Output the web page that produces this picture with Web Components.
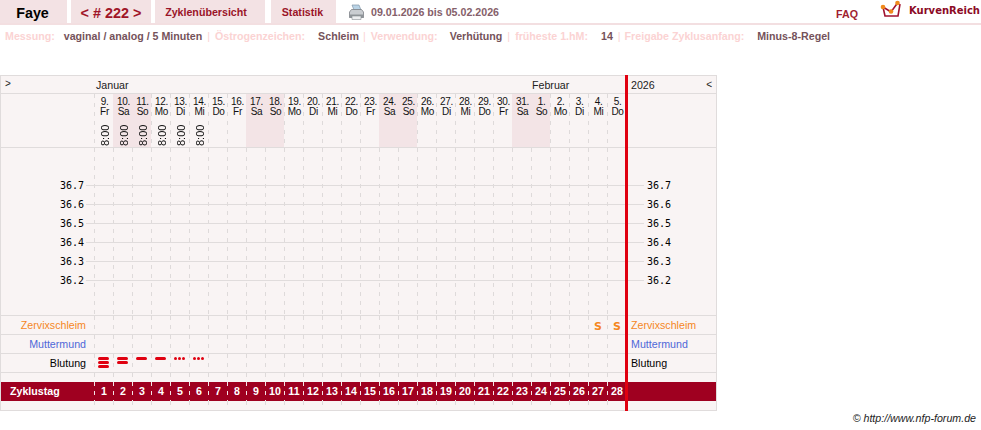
<!DOCTYPE html>
<html lang="de"><head><meta charset="utf-8"><title>Faye</title>
<style>
html,body{margin:0;padding:0;background:#fff;font:10.67px "Liberation Sans",Arial,sans-serif}
</style></head><body>
<top-nav></top-nav>
<info-bar></info-bar>
<cycle-chart></cycle-chart>
<page-foot></page-foot>
<script>
const COLORS={tab:'#f3e2e4',line:'#e0dcdc',panel:'#f9f4f4',wk:'#f3e4e6',red:'#9f0020',bar:'#e00010'};
function def(name,css,html,extra){
  customElements.define(name,class extends HTMLElement{
    connectedCallback(){ if(this.shadowRoot) return;
      const r=this.attachShadow({mode:'open'});
      r.innerHTML='<style>'+css+'</style>'+(typeof html==='function'?html(this):html);
      if(extra) extra(r,this);
    }
  });
}
const DASH='repeating-linear-gradient(to bottom,#000 0 4px,transparent 4px 9px)';
def('nav-tab',`:host{display:flex;align-items:center;justify-content:center;height:23px;background:${COLORS.tab};font:bold 10.67px "Liberation Sans",sans-serif;color:#9a1428;box-sizing:border-box}`,'<slot></slot>');
def('top-nav',`
:host{display:flex;height:23px;border-bottom:2px solid #f3dfe1;align-items:stretch;position:relative}
nav-tab.a{width:67px;font-size:14.3px;color:#000;padding:2px 2px 0 0}
nav-tab.b{width:80px;margin-left:4px;font-size:14.4px;color:#a01428;padding-top:2px}
nav-tab.c{width:110px;margin-left:4px;padding-right:8px}
nav-tab.d{width:65px;margin-left:6px;padding-right:2px}
.p{margin:4px 0 0 12px;width:17px;height:17px;flex:none}
.date{margin-left:6px;font-weight:bold;color:#85606a;line-height:24px}
.sp{flex:1}
.faq{font-weight:bold;color:#a01f30;line-height:28px;margin-right:22px}
.logo{width:24px;height:20px;margin-right:5px;flex:none}
.kr{font:bold 10px "DejaVu Sans",sans-serif;color:#8b0a25;line-height:21px;margin-right:1px}
`,`<nav-tab class="a">Faye</nav-tab><nav-tab class="b">&lt; # 222 &gt;</nav-tab><nav-tab class="c">Zyklenübersicht</nav-tab><nav-tab class="d">Statistik</nav-tab>
<svg class="p" viewBox="0 0 17 17"><path d="M4 1h7l2 5H6z" fill="#b9d3e6" stroke="#8297a8" stroke-width=".7"/><path d="M1.5 8l2-2.500h10l2 2.500v5.500h-14z" fill="#c9cdd1" stroke="#7d8287" stroke-width=".8"/><path d="M1.500 10.500h14v3.500h-14z" fill="#8f9499"/><path d="M4 12h9v3.500h-9z" fill="#eceef0" stroke="#8b9095" stroke-width=".6"/></svg>
<span class="date">09.01.2026 bis 05.02.2026</span><span class="sp"></span><span class="faq">FAQ</span>
<svg class="logo" viewBox="0 0 24 20"><path d="M3 7l2 9h13l2-12M3 7l8 5 6.500-9" fill="none" stroke="#a0122f" stroke-width="1.600"/><circle cx="3" cy="7" r="2.300" fill="#f08a1c"/><circle cx="11" cy="11.500" r="2.300" fill="#f08a1c"/><circle cx="17.500" cy="3" r="2.300" fill="#f08a1c"/></svg>
<span class="kr">KurvenReich</span>`);
def('info-bar',`:host{display:flex;height:22px;align-items:center;padding-left:5px;font:bold 10.67px "Liberation Sans",sans-serif;white-space:pre}
b{font-weight:bold;color:#fbd3d3}i{font-style:normal;color:#75525a}u{text-decoration:none;color:#fbd3d3;font-weight:normal}`,
`<b>Messung:</b><i style="margin-left:9px">vaginal / analog / 5 Minuten</i><u style="margin-left:5px">|</u><b style="margin-left:5px">Östrogenzeichen:</b><i style="margin-left:13px">Schleim</i><u style="margin-left:4px">|</u><b style="margin-left:5px">Verwendung:</b><i style="margin-left:12px">Verhütung</i><u style="margin-left:5px">|</u><b style="margin-left:5px">früheste 1.hM:</b><i style="margin-left:13px">14</i><u style="margin-left:5px">|</u><b style="margin-left:4px">Freigabe Zyklusanfang:</b><i style="margin-left:13px">Minus-8-Regel</i>`);

/* one row: label column, 28 day columns, right column */
def('chart-row',`
:host{display:grid;grid-template-columns:93px 532px 90px;border-bottom:1px solid ${COLORS.line};height:var(--h,18px);background:var(--bg,${COLORS.panel});color:var(--fg,#000);font:10.67px "Liberation Sans",sans-serif}
.l{display:flex;align-items:center;justify-content:flex-end;padding-right:8px;white-space:nowrap;color:var(--c,inherit)}
.d{position:relative;display:grid;grid-template-columns:repeat(28,19px)}
:host(:not([nodash])) .d::before{content:"";position:absolute;inset:0;background:repeating-linear-gradient(to right,var(--dash,#dedada) 0 1px,transparent 1px 19px);-webkit-mask-image:${DASH};mask-image:${DASH}}
.r{display:flex;align-items:center;padding-left:5px;white-space:nowrap;color:var(--c,inherit)}
`,`<div class="l"><slot name="label"></slot></div><div class="d"><slot></slot></div><div class="r"><slot name="right"></slot></div>`);

def('day-head',`
:host{display:block;position:relative;text-align:center;font:10px/10px "Liberation Sans",sans-serif;letter-spacing:-.3px;color:#111;padding-top:3px;padding-left:2px;box-sizing:border-box;height:53px;background:var(--w,transparent)}
div{white-space:nowrap}
.t{position:absolute;left:6px;bottom:1px;writing-mode:vertical-rl;transform:rotate(180deg);font:11px/11px "Liberation Sans",sans-serif;letter-spacing:0;height:24px;text-align:left}
`,h=>`<div>${h.getAttribute('d')}.</div><div>${h.getAttribute('w')}</div>${h.hasAttribute('t')?`<span class="t">8:00</span>`:''}`);

def('temp-row',`
:host{display:flex;height:19px;align-items:center;font:10px "DejaVu Sans Mono",monospace;color:#000}
span{padding-bottom:1px}
.a{width:83px;text-align:right;flex:none}
.n{flex:none;width:558px;height:1px;background:${COLORS.line};margin:0 3px 0 2px;padding:0}
`,h=>{const v=h.getAttribute('v');return `<span class="a">${v}</span><span class="n"></span><span>${v}</span>`});

def('bleed-mark',`
:host{display:flex;flex-direction:column;gap:1px;padding:3px 0 0 4px;width:11px}
.b{height:3px;width:11px;background:${COLORS.bar};border-radius:2px}
.o{display:flex;gap:1px}.o span{width:3px;height:3px;background:${COLORS.bar};border-radius:50%}
`,h=>{const t=h.getAttribute('n');return t==='o'?'<div class="o"><span></span><span></span><span></span></div>':'<div class="b"></div>'.repeat(+t)});

const days=[[9,'Fr'],[10,'Sa'],[11,'So'],[12,'Mo'],[13,'Di'],[14,'Mi'],[15,'Do'],[16,'Fr'],[17,'Sa'],[18,'So'],[19,'Mo'],[20,'Di'],[21,'Mi'],[22,'Do'],[23,'Fr'],[24,'Sa'],[25,'So'],[26,'Mo'],[27,'Di'],[28,'Mi'],[29,'Do'],[30,'Fr'],[31,'Sa'],[1,'So'],[2,'Mo'],[3,'Di'],[4,'Mi'],[5,'Do']];
const blood=['3','2','1','1','o','o'];
const dayCells=days.map(([d,w],i)=>`<day-head d="${d}" w="${w}" ${i<6?'t':''} style="${(w==='Sa'||w==='So')?'--w:'+COLORS.wk:''}"></day-head>`).join('');
const temps=['36.7','36.6','36.5','36.4','36.3','36.2'].map(v=>`<temp-row v="${v}"></temp-row>`).join('');
const empty=n=>'<span></span>'.repeat(n);

def('cycle-chart',`
:host{display:block;position:relative;width:715px;margin-top:28px;border:1px solid ${COLORS.line};border-width:1px 1px 0 1px;background:${COLORS.panel}}
.red{position:absolute;left:624px;top:-1px;bottom:0;width:3px;background:${COLORS.bar}}
.head{font:10.67px "Liberation Sans",sans-serif;color:#222}
.head .m{grid-column:span 23;padding-left:2px;line-height:19px}.head .m2{grid-column:span 5;line-height:19px;padding-left:1px}
.head [slot=label]{width:93px;box-sizing:border-box;padding:0 0 5px 4px;margin-right:-8px;line-height:11px;font-size:10px}
.head [slot=right]{display:flex;justify-content:space-between;width:81px;line-height:15px}
.head [slot=right] em{font-style:normal;font-size:10px;padding-right:0;line-height:10px;margin-top:2px}
.plot{position:relative;height:167px;border-bottom:1px solid ${COLORS.line};box-sizing:content-box;padding-top:0}
.plot::before{content:"";position:absolute;left:93px;width:532px;top:0;bottom:0;background:repeating-linear-gradient(to right,#dedada 0 1px,transparent 1px 19px);-webkit-mask-image:${DASH};mask-image:${DASH}}
.rows{padding-top:28px;position:relative}
.zs{font:bold 11px "DejaVu Sans",sans-serif;color:#f5871f;text-align:center;height:16px;padding:2px 0 0 1px;line-height:18px}
.red-row{--bg:${COLORS.red};--fg:#fff;--dash:#f4e3e6;--h:19px;border-bottom:0;font-weight:bold}
.red-row [slot=label]{font-weight:bold;width:93px;box-sizing:border-box;padding-left:9px;margin-right:-8px;padding-bottom:1px}
.red-row span.n{text-align:center;font-weight:bold;font-size:10.67px;line-height:18px;padding-left:1px}
`,`
<chart-row class="head" nodash style="--h:17px"><span slot="label">&gt;</span><span class="m">Januar</span><span class="m2">Februar</span><span slot="right">2026<em>&lt;</em></span></chart-row>
<chart-row style="--h:53px">${dayCells}</chart-row>
<div class="plot"><div class="rows">${temps}</div></div>
<chart-row style="--c:#f5871f"><span slot="label">Zervixschleim</span>${empty(26)}<span class="zs">S</span><span class="zs">S</span><span slot="right">Zervixschleim</span></chart-row>
<chart-row style="--c:#4f68d8"><span slot="label">Muttermund</span><span slot="right">Muttermund</span></chart-row>
<chart-row><span slot="label">Blutung</span>${blood.map(n=>`<bleed-mark n="${n}"></bleed-mark>`).join('')}<span slot="right">Blutung</span></chart-row>
<chart-row style="--h:9px;border-bottom:0"></chart-row>
<chart-row class="red-row"><span slot="label">Zyklustag</span>${days.map((_,i)=>`<span class="n">${i+1}</span>`).join('')}</chart-row>
<chart-row style="--h:9px"></chart-row>
<div class="red"></div>`);
def('page-foot',`:host{display:block;width:976px;text-align:right;font:italic 10.67px "Liberation Sans",sans-serif;color:#222;line-height:14px;margin-top:0}`,'© http://www.nfp-forum.de');
</script>
</body></html>
